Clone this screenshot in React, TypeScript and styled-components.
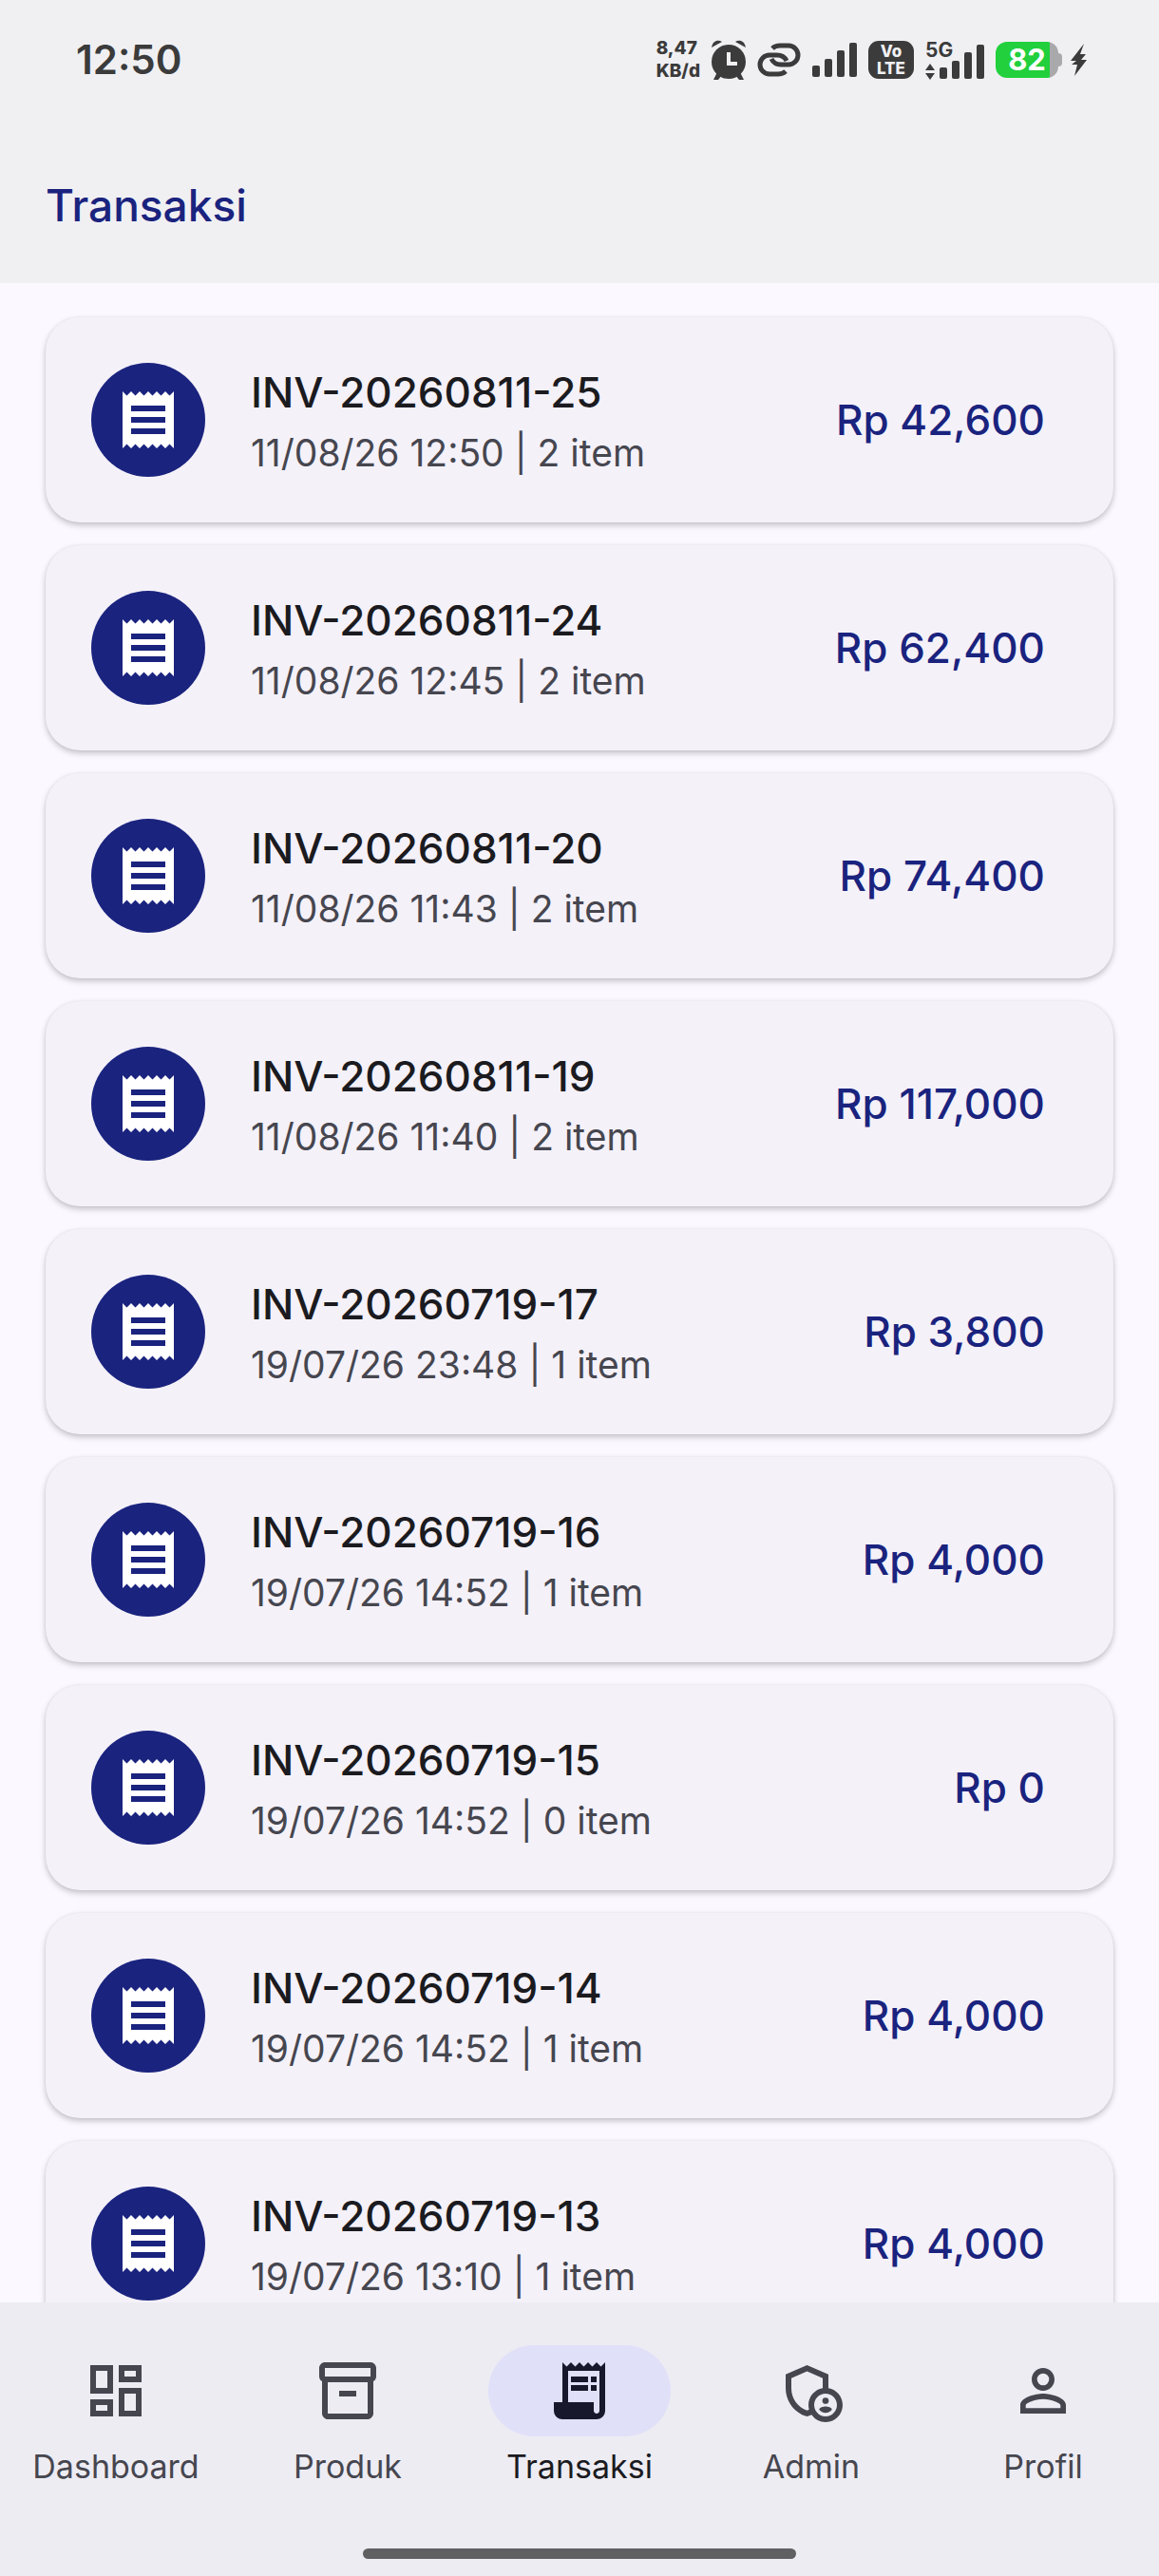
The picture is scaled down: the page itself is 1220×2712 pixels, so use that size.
import React from "react";
import styled, { createGlobalStyle } from "styled-components";
import type { IconType } from "react-icons";
import {
  MdOutlineAdminPanelSettings,
  MdOutlineDashboard,
  MdOutlineInventory2,
  MdPersonOutline,
  MdReceipt,
  MdReceiptLong,
} from "react-icons/md";

const color = {
  bar: "#f0f0f3",
  page: "#fbf8ff",
  card: "#f4f1f9",
  nav: "#edecf3",
  pill: "#e0e0f9",
  primary: "#1a237e",
  text: "#1b1b1f",
  muted: "#46464f",
  status: "#3b3b3b",
  charge: "#21d03c",
};

const GlobalStyle = createGlobalStyle`
  * { box-sizing: border-box; }
  body {
    margin: 0;
    background: ${color.page};
    font-family: Inter, "Noto Sans", sans-serif;
  }
  h1, h2, p, ul { margin: 0; padding: 0; }
  ul { list-style: none; }
`;

const Screen = styled.div`
  display: flex;
  flex-direction: column;
  height: 100vh;
  overflow: hidden;
`;

const Header = styled.header`
  flex: none;
  background: ${color.bar};
`;

const StatusBar = styled.div`
  display: flex;
  align-items: center;
  justify-content: space-between;
  height: 126px;
  padding: 0 76px 0 80px;
  color: ${color.status};
`;

const Clock = styled.time`
  font-size: 42px;
  line-height: 56px;
  font-weight: 600;
`;

const StatusIcons = styled.div`
  display: flex;
  align-items: center;
  gap: 12px;

  svg { display: block; }
`;

const NetSpeed = styled.div`
  font-size: 19px;
  line-height: 24px;
  font-weight: 800;
`;

const VolteBadge = styled.div`
  display: flex;
  flex-direction: column;
  align-items: center;
  justify-content: center;
  width: 48px;
  height: 40px;
  border-radius: 11px;
  background: ${color.status};
  color: ${color.bar};
  font-size: 17px;
  line-height: 18px;
  font-weight: 800;

  span { display: block; height: 18px; }
`;

const Mobile = styled.div`
  display: grid;
  width: 62px;
`;

const Generation = styled.span`
  font-size: 21px;
  line-height: 20px;
  font-weight: 700;
`;

const Battery = styled.div`
  display: flex;
  align-items: center;
  margin-right: -3px;
`;

const BatteryBody = styled.div`
  display: flex;
  align-items: center;
  justify-content: center;
  width: 66px;
  height: 38px;
  border-radius: 12px;
  background: linear-gradient(to right, ${color.charge} 57px, #a9a9ac 57px);
  color: #fff;
  font-size: 31px;
  line-height: 38px;
  font-weight: 700;
`;

const BatteryTip = styled.div`
  width: 4px;
  height: 14px;
  border-radius: 0 4px 4px 0;
  background: #a9a9ac;
`;

const TitleBar = styled.div`
  display: flex;
  align-items: center;
  height: 172px;
  padding: 8px 48px 0;
`;

const Title = styled.h1`
  color: ${color.primary};
  font-size: 46px;
  line-height: 60px;
  font-weight: 500;
`;

const List = styled.ul`
  flex: 1;
  min-height: 0;
  display: flex;
  flex-direction: column;
  gap: 24px;
  padding: 36px 48px;
  overflow: hidden;
`;

const Card = styled.li`
  flex: none;
  display: flex;
  align-items: center;
  gap: 48px;
  min-height: 216px;
  padding: 36px 72px 36px 48px;
  border-radius: 36px;
  background: ${color.card};
  box-shadow: 0 3px 6px rgba(0, 0, 0, 0.22), 0 0 3px rgba(0, 0, 0, 0.06);
`;

const Avatar = styled.div`
  display: flex;
  align-items: center;
  justify-content: center;
  width: 120px;
  height: 120px;
  border-radius: 50%;
  background: ${color.primary};
  color: #fff;
`;

const Details = styled.div`
  flex: 1;
  min-width: 0;
  padding-top: 6px;
`;

const Invoice = styled.h2`
  color: ${color.text};
  font-size: 44px;
  line-height: 64px;
  font-weight: 500;
`;

const Meta = styled.p`
  color: ${color.muted};
  font-size: 39px;
  line-height: 64px;
`;

const Amount = styled.p`
  color: ${color.primary};
  font-size: 44px;
  line-height: 64px;
  font-weight: 500;
`;

const BottomBar = styled.footer`
  flex: none;
  display: flex;
  flex-direction: column;
  align-items: center;
  background: ${color.nav};
`;

const Nav = styled.nav`
  align-self: stretch;
  display: flex;
  padding-top: 45px;
`;

const NavButton = styled.button<{ $active: boolean }>`
  flex: 1;
  display: flex;
  flex-direction: column;
  align-items: center;
  gap: 10px;
  padding: 0;
  border: 0;
  background: none;
  color: ${(p) => (p.$active ? color.text : color.muted)};
  font-family: inherit;
  font-size: 34px;
  line-height: 44px;
  cursor: pointer;
`;

const Pill = styled.span<{ $active: boolean }>`
  display: flex;
  align-items: center;
  justify-content: center;
  width: 192px;
  height: 96px;
  border-radius: 48px;
  background: ${(p) => (p.$active ? color.pill : "transparent")};
  color: ${(p) => (p.$active ? "#17182c" : color.muted)};
`;

const HomeIndicator = styled.div`
  width: 456px;
  height: 11px;
  margin: 64px 0 18px;
  border-radius: 6px;
  background: #606062;
`;

const transactions = [
  { invoice: "INV-20260811-25", date: "11/08/26 12:50", items: 2, total: 42600 },
  { invoice: "INV-20260811-24", date: "11/08/26 12:45", items: 2, total: 62400 },
  { invoice: "INV-20260811-20", date: "11/08/26 11:43", items: 2, total: 74400 },
  { invoice: "INV-20260811-19", date: "11/08/26 11:40", items: 2, total: 117000 },
  { invoice: "INV-20260719-17", date: "19/07/26 23:48", items: 1, total: 3800 },
  { invoice: "INV-20260719-16", date: "19/07/26 14:52", items: 1, total: 4000 },
  { invoice: "INV-20260719-15", date: "19/07/26 14:52", items: 0, total: 0 },
  { invoice: "INV-20260719-14", date: "19/07/26 14:52", items: 1, total: 4000 },
  { invoice: "INV-20260719-13", date: "19/07/26 13:10", items: 1, total: 4000 },
];

const tabs: { label: string; Icon: IconType }[] = [
  { label: "Dashboard", Icon: MdOutlineDashboard },
  { label: "Produk", Icon: MdOutlineInventory2 },
  { label: "Transaksi", Icon: MdReceiptLong },
  { label: "Admin", Icon: MdOutlineAdminPanelSettings },
  { label: "Profil", Icon: MdPersonOutline },
];

const rupiah = (n: number) => "Rp " + n.toLocaleString("en-US");

const AlarmIcon = () => (
  <svg width="36" height="42" viewBox="0 0 36 42" fill="currentColor">
    <path d="M0 8C1 1 7 -1 11 2zM36 8C35 1 29 -1 25 2z" />
    <path d="M6 34l5 3-4 5H2zM30 34l-5 3 4 5h5z" />
    <circle cx="18" cy="23" r="18" />
    <path d="M18 13v12h9" fill="none" stroke={color.bar} strokeWidth="4" />
  </svg>
);

const LinkIcon = () => (
  <svg width="46" height="36" viewBox="0 0 46 36" fill="none" stroke="currentColor" strokeWidth="5">
    <path d="M16 6C18 4 21 3 24 3h9a10 10 0 0 1 0 20h-8c-4 0-8-2-10-6" />
    <path d="M30 30c-2 2-5 3-8 3h-9a10 10 0 0 1 0-20h8c4 0 8 2 10 6" />
  </svg>
);

const Bars = () => (
  <>
    <rect x="0" y="24" width="8" height="12" rx="2" />
    <rect x="13" y="17" width="8" height="19" rx="2" />
    <rect x="26" y="8" width="8" height="28" rx="2" />
    <rect x="39" y="0" width="8" height="36" rx="2" />
  </>
);

const SignalIcon = () => (
  <svg width="47" height="36" viewBox="0 0 47 36" fill="currentColor">
    <Bars />
  </svg>
);

const MobileDataIcon = () => (
  <svg
    width="62"
    height="20"
    viewBox="0 16 62 20"
    fill="currentColor"
    overflow="visible"
  >
    <path d="M0 27l5-7 5 7zM0 30l5 7 5-7z" />
    <g transform="translate(15 0)">
      <Bars />
    </g>
  </svg>
);

const BoltIcon = () => (
  <svg width="17" height="34" viewBox="0 0 17 34" fill="currentColor">
    <path d="M14 0L0 18h6L1 22h6L4 34 17 17h-6l5-6h-6z" />
  </svg>
);

export default function App() {
  const [active, setActive] = React.useState("Transaksi");

  return (
    <Screen>
      <GlobalStyle />
      <Header>
        <StatusBar>
          <Clock>12:50</Clock>
          <StatusIcons>
            <NetSpeed>
              8,47
              <br />
              KB/d
            </NetSpeed>
            <AlarmIcon />
            <LinkIcon />
            <SignalIcon />
            <VolteBadge>
              <span>Vo</span>
              <span>LTE</span>
            </VolteBadge>
            <Mobile>
              <Generation>5G</Generation>
              <MobileDataIcon />
            </Mobile>
            <Battery>
              <BatteryBody>82</BatteryBody>
              <BatteryTip />
            </Battery>
            <BoltIcon />
          </StatusIcons>
        </StatusBar>
        <TitleBar>
          <Title>Transaksi</Title>
        </TitleBar>
      </Header>
      <List>
        {transactions.map((t) => (
          <Card key={t.invoice}>
            <Avatar>
              <MdReceipt size={72} />
            </Avatar>
            <Details>
              <Invoice>{t.invoice}</Invoice>
              <Meta>{`${t.date} | ${t.items} item`}</Meta>
            </Details>
            <Amount>{rupiah(t.total)}</Amount>
          </Card>
        ))}
      </List>
      <BottomBar>
        <Nav>
          {tabs.map(({ label, Icon }) => (
            <NavButton
              key={label}
              type="button"
              $active={active === label}
              aria-current={active === label ? "page" : undefined}
              onClick={() => setActive(label)}
            >
              <Pill $active={active === label}>
                <Icon size={72} />
              </Pill>
              {label}
            </NavButton>
          ))}
        </Nav>
        <HomeIndicator />
      </BottomBar>
    </Screen>
  );
}
